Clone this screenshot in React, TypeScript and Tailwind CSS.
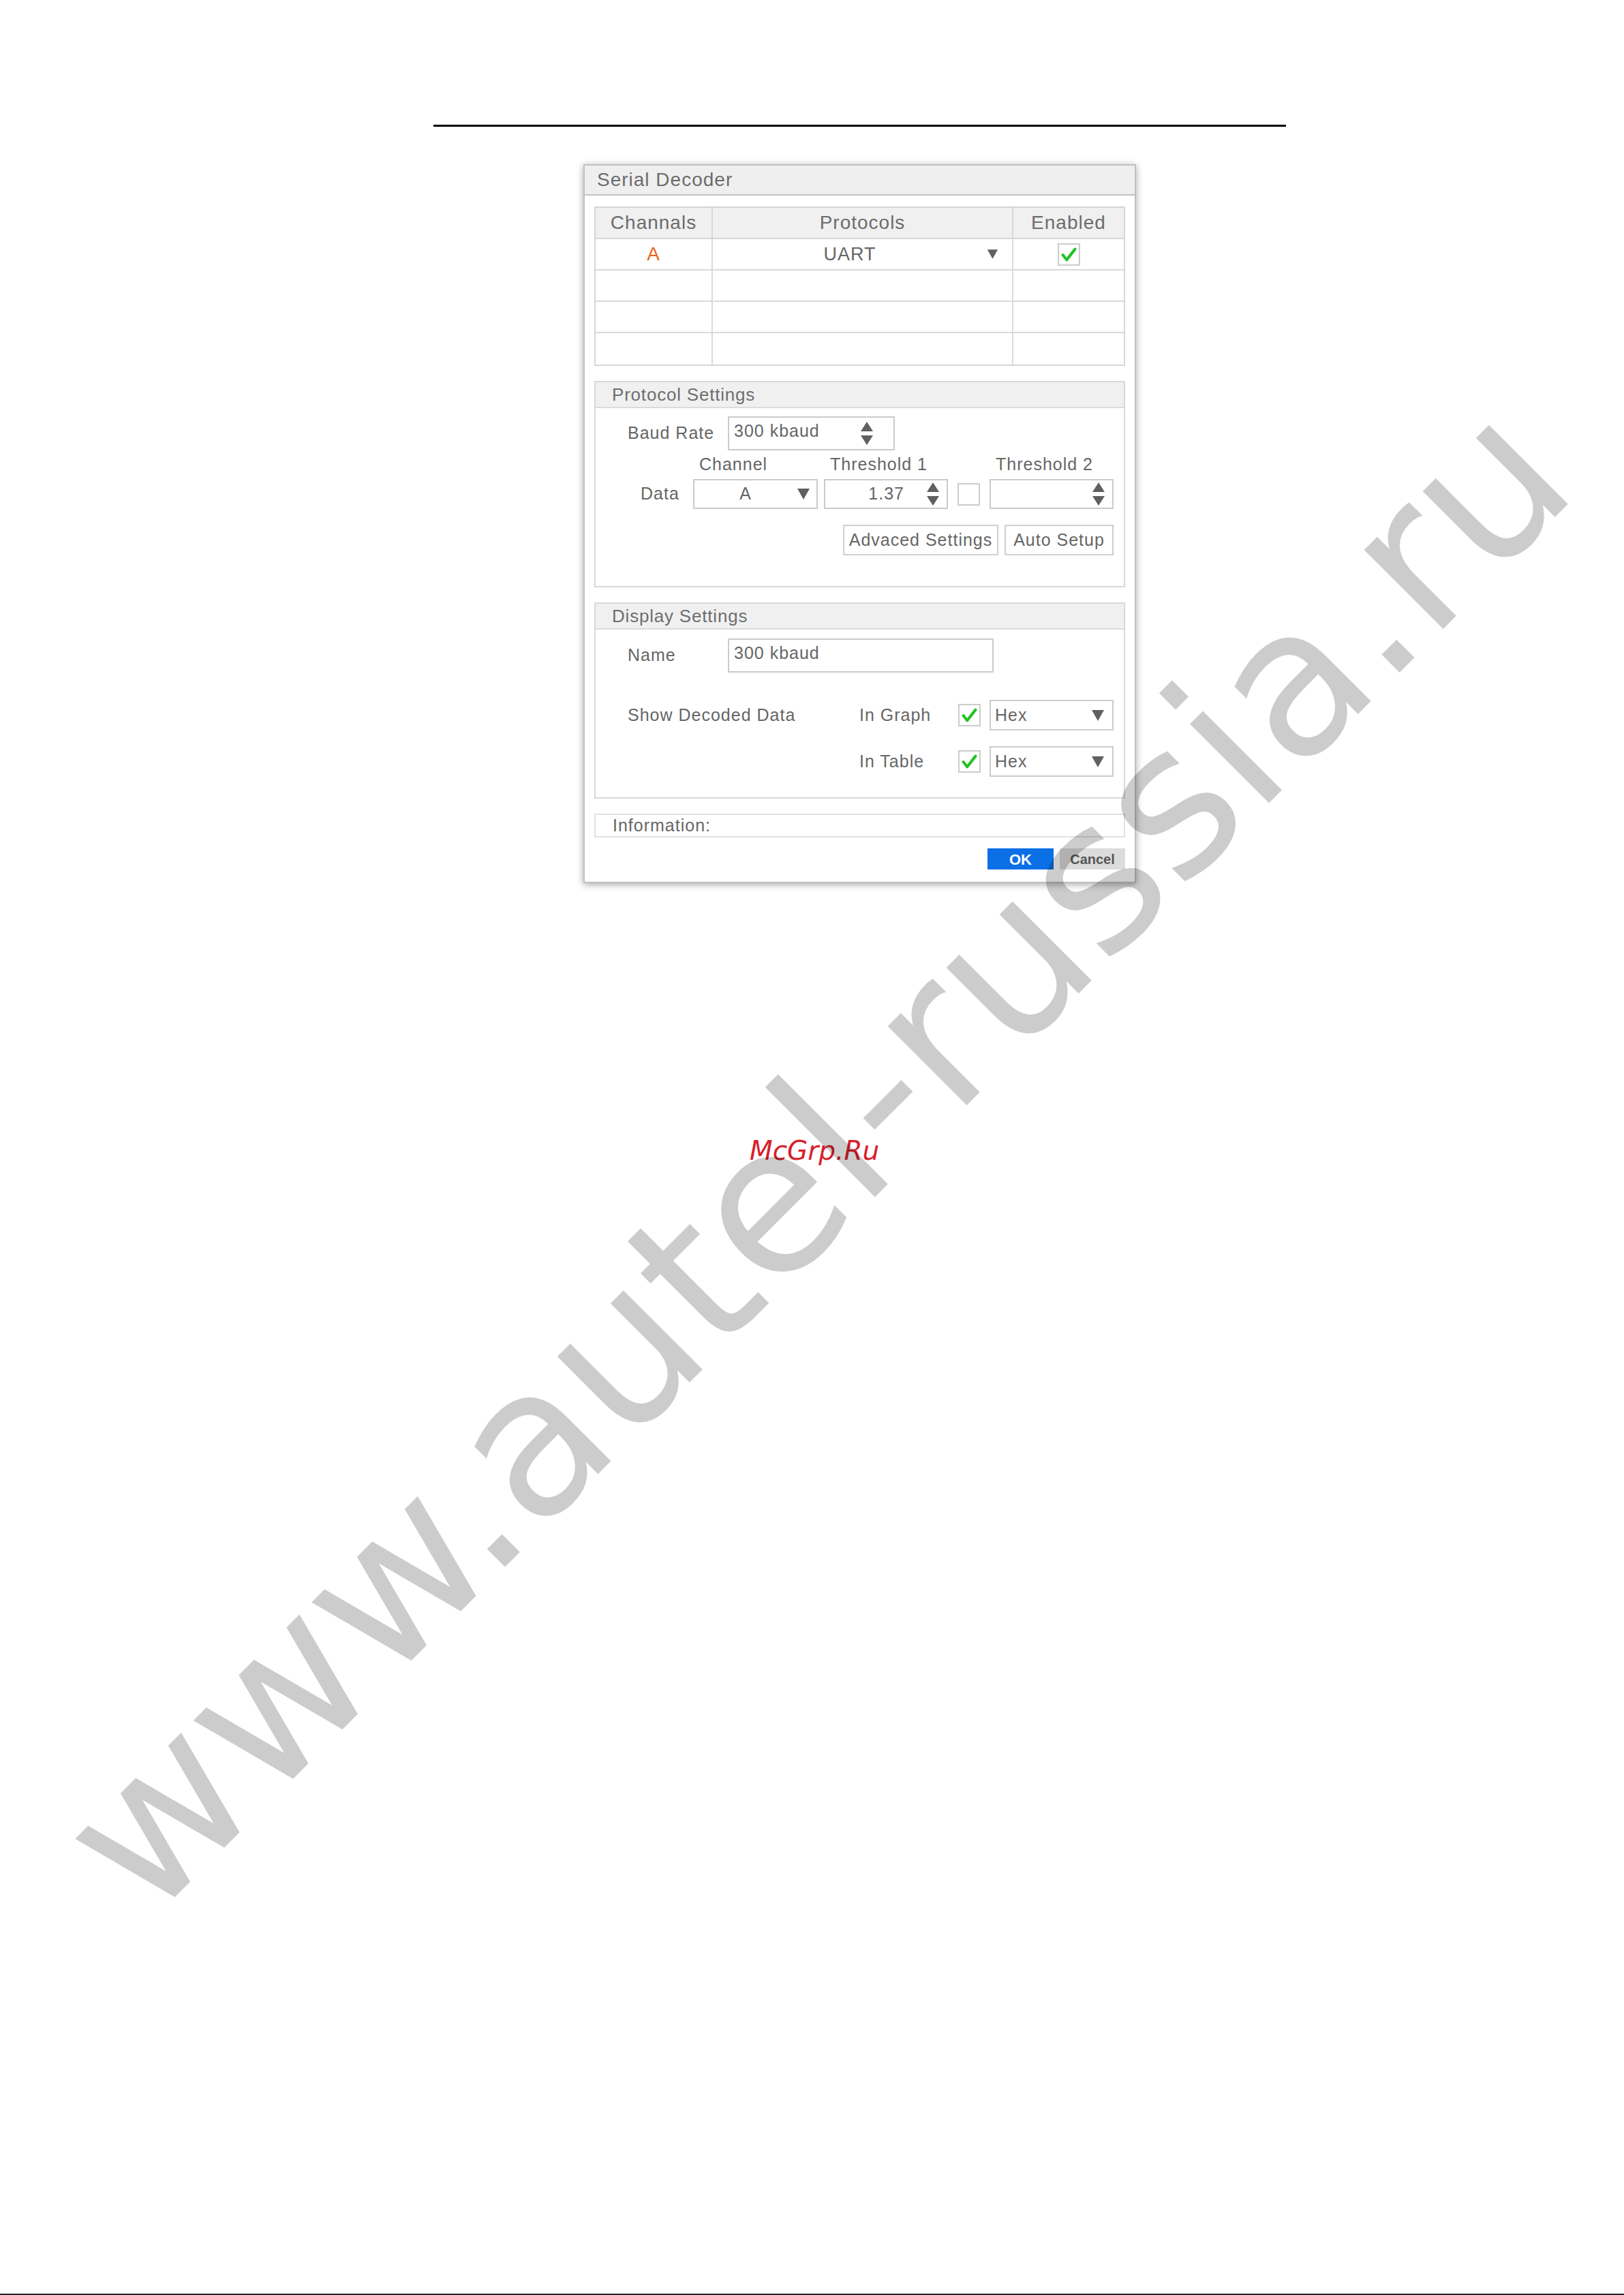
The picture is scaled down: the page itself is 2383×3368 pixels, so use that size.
import type { ReactNode } from 'react'

const ui = "font-['Liberation_Sans',Arial,sans-serif]"

function DownArrow({ size = 'h-[18px] w-[20px]' }: { size?: string }) {
  return (
    <svg viewBox="0 0 20 18" className={size} aria-hidden="true">
      <path d="M1 1h18L10 17z" fill="#606060" />
    </svg>
  )
}

function SpinArrows() {
  return (
    <svg viewBox="0 0 20 36" className="h-[36px] w-[20px]" aria-hidden="true">
      <path d="M10 1l9 14H1z" fill="#606060" />
      <path d="M1 21h18L10 35z" fill="#606060" />
    </svg>
  )
}

function CheckBox({ checked = false }: { checked?: boolean }) {
  return (
    <span className="flex size-[33px] shrink-0 items-center justify-center border-2 border-[#cccccc] bg-white">
      {checked && (
        <svg viewBox="0 0 24 24" className="size-[27px]" aria-hidden="true">
          <path
            d="M4 12.5l5 6.5L20 5"
            fill="none"
            stroke="#22c322"
            strokeWidth="3.6"
            strokeLinecap="round"
            strokeLinejoin="round"
          />
        </svg>
      )}
    </span>
  )
}

function Section({ title, children, className }: { title: string; children: ReactNode; className: string }) {
  return (
    <section className="border-2 border-[#d8d8d8]">
      <div className="h-[38px] border-b-2 border-[#dcdcdc] bg-[#f0f0f0] pl-[24px] text-[26px] leading-[36px] tracking-[0.8px] text-[#6e6e6e]">
        {title}
      </div>
      <div className={className}>{children}</div>
    </section>
  )
}

function HexSelect() {
  return (
    <div className="flex h-[45px] w-[182px] items-center justify-between border-2 border-[#cccccc] pl-[6px] pr-[11px]">
      <span>Hex</span>
      <DownArrow />
    </div>
  )
}

const rows = [
  { channel: 'A', protocol: 'UART', enabled: true },
  { channel: '', protocol: '', enabled: false },
  { channel: '', protocol: '', enabled: false },
  { channel: '', protocol: '', enabled: false },
]

function SerialDecoder() {
  return (
    <div
      className={`${ui} ml-[856px] mt-[55px] w-[811px] border-2 border-[#c0c0c0] bg-white text-[25px] tracking-[1px] text-[#666666] shadow-[0_2px_10px_rgba(0,0,0,0.35)]`}
    >
      <div className="h-[44px] border-b-2 border-[#c2c2c2] bg-[#efefef] pl-[18px] text-[28px] leading-[42px] text-[#6c6c6c]">
        Serial Decoder
      </div>

      <div className="px-[14px] pb-[18px] pt-[16px]">
        {/* channel / protocol table */}
        <div className="border-2 border-[#d6d6d6]">
          <div className="grid h-[46px] grid-cols-[172px_441px_1fr] border-b-2 border-[#d6d6d6] bg-[#f0f0f0] text-[28px] text-[#6c6c6c]">
            <div className="flex items-center justify-center border-r-2 border-[#d6d6d6]">Channals</div>
            <div className="flex items-center justify-center border-r-2 border-[#d6d6d6]">Protocols</div>
            <div className="flex items-center justify-center">Enabled</div>
          </div>
          {rows.map((row, i) => (
            <div
              key={i}
              className={`grid h-[46px] grid-cols-[172px_441px_1fr] ${i < rows.length - 1 ? 'border-b-2' : 'h-[44px]'} border-[#dadada]`}
            >
              <div className="flex items-center justify-center border-r-2 border-[#dadada] text-[28px] text-[#e8641c]">
                {row.channel}
              </div>
              <div className="flex items-center border-r-2 border-[#dadada] pr-[20px]">
                <span className="flex-1 text-center text-[27px]">{row.protocol}</span>
                {row.protocol && <DownArrow size="h-[16px] w-[17px]" />}
              </div>
              <div className="flex items-center justify-center">{row.protocol && <CheckBox checked={row.enabled} />}</div>
            </div>
          ))}
        </div>

        <div className="mt-[22px]">
          <Section title="Protocol Settings" className="pb-[45px] pt-[12px]">
            <div className="flex h-[50px] items-center pl-[47px]">
              <span className="w-[147px]">Baud Rate</span>
              <div className="flex h-[50px] w-[245px] items-center justify-between border-2 border-[#cbcbcb] pl-[7px] pr-[29px]">
                <span className="-mt-[6px]">300 kbaud</span>
                <SpinArrows />
              </div>
            </div>

            <div className="flex h-[42px] items-center pl-[143px]">
              <span className="w-[183px] pl-[9px]">Channel</span>
              <span className="ml-[9px] w-[182px] pl-[9px]">Threshold 1</span>
              <span className="ml-[61px] w-[182px] pl-[9px]">Threshold 2</span>
            </div>

            <div className="flex h-[44px] items-center">
              <span className="w-[143px] pl-[66px]">Data</span>
              <div className="flex h-[44px] w-[183px] items-center border-2 border-[#cbcbcb] pr-[9px]">
                <span className="flex-1 text-center">A</span>
                <DownArrow />
              </div>
              <div className="ml-[9px] flex h-[44px] w-[182px] items-center justify-end gap-[32px] border-2 border-[#cbcbcb] pr-[10px]">
                <span>1.37</span>
                <SpinArrows />
              </div>
              <div className="ml-[14px]">
                <CheckBox />
              </div>
              <div className="ml-[14px] flex h-[44px] w-[182px] items-center justify-end border-2 border-[#cbcbcb] pr-[10px]">
                <SpinArrows />
              </div>
            </div>

            <div className="mt-[23px] flex h-[45px] pl-[363px]">
              <button className="h-[45px] w-[228px] border-2 border-[#cecece] bg-white tracking-[1px] text-[#666666]">
                Advaced Settings
              </button>
              <button className="ml-[9px] h-[45px] w-[160px] border-2 border-[#cecece] bg-white tracking-[1px] text-[#666666]">
                Auto Setup
              </button>
            </div>
          </Section>
        </div>

        <div className="mt-[22px]">
          <Section title="Display Settings" className="pb-[30px] pt-[13px]">
            <div className="flex h-[50px] items-center pl-[47px]">
              <span className="w-[147px]">Name</span>
              <div className="flex h-[50px] w-[390px] items-center border-2 border-[#cbcbcb] pl-[7px]">
                <span className="-mt-[6px]">300 kbaud</span>
              </div>
            </div>

            <div className="mt-[40px] flex h-[45px] items-center pl-[47px]">
              <span className="w-[340px]">Show Decoded Data</span>
              <span className="w-[145px]">In Graph</span>
              <CheckBox checked />
              <div className="ml-[13px]">
                <HexSelect />
              </div>
            </div>

            <div className="mt-[23px] flex h-[45px] items-center pl-[387px]">
              <span className="w-[145px]">In Table</span>
              <CheckBox checked />
              <div className="ml-[13px]">
                <HexSelect />
              </div>
            </div>
          </Section>
        </div>

        <div className="mt-[22px] flex h-[35px] items-center border-2 border-[#e2e2e2] pl-[25px]">Information:</div>

        <div className="mt-[16px] flex justify-end gap-[9px]">
          <button className="h-[31px] w-[97px] bg-[#0b6fe6] text-[22px] font-bold tracking-normal text-white">OK</button>
          <button className="h-[31px] w-[96px] bg-[#dcdcdc] text-[20px] font-bold tracking-normal text-[#555555]">
            Cancel
          </button>
        </div>
      </div>
    </div>
  )
}

export default function App() {
  return (
    <div className="relative flex h-[3368px] w-[2383px] flex-col overflow-hidden bg-white">
      <div className="ml-[636px] mt-[183px] h-[3px] w-[1251px] bg-black" />

      <SerialDecoder />

      <p className="ml-[1100px] mt-[373px] font-['DejaVu_Sans',sans-serif] text-[39px] italic leading-none text-[#d8202a]">
        McGrp.Ru
      </p>

      <div className="mt-auto h-[2px] w-full bg-[#222]" />

      {/* site watermark laid across the page */}
      <div className="pointer-events-none absolute left-[218px] top-[2570px] origin-[0_254px] -rotate-45 whitespace-nowrap font-['DejaVu_Sans',sans-serif] text-[300px] leading-none text-black/20">
        www.autel-russia.ru
      </div>
    </div>
  )
}
